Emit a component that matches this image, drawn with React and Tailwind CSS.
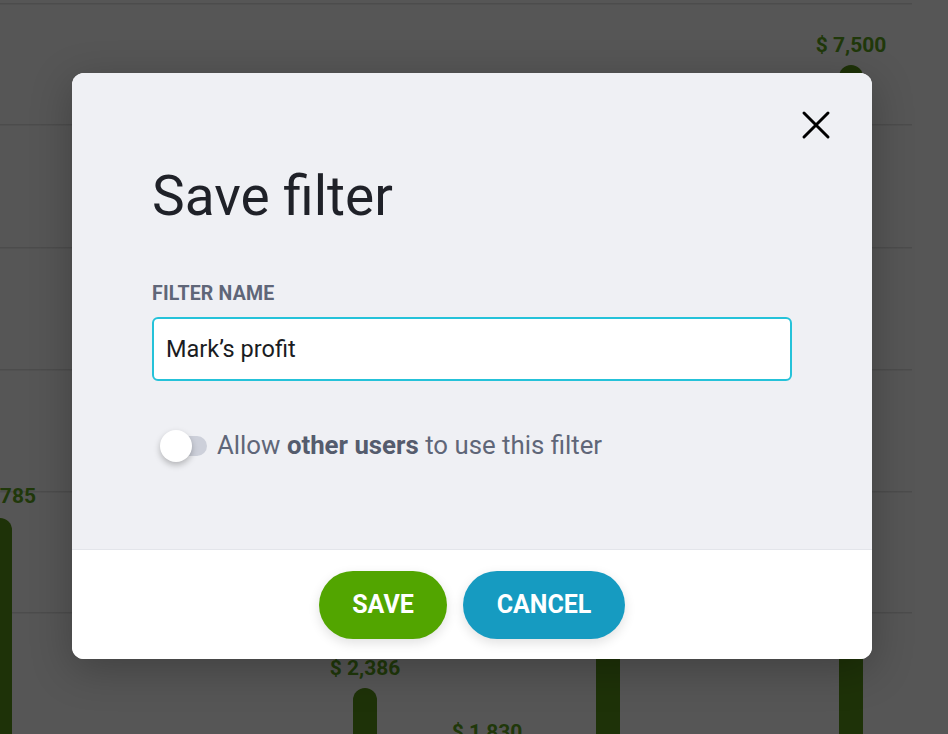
import React, { useState } from 'react';

const GRID_LINES = [3, 124, 247, 369, 491, 612];

const BARS = [
  { x: -12, top: 518, label: '$ 1,785', lx: 36, ly: 503, anchor: 'end' },
  { x: 353, top: 688, label: '$ 2,386', lx: 365, ly: 675, anchor: 'middle' },
  { x: 596, top: 300, label: null },
  { x: 839, top: 65, label: '$ 7,500', lx: 851, ly: 52, anchor: 'middle' },
];

// dimmed chart that sits behind the dialog
const BackdropChart = () => (
  <svg className="absolute inset-0" width="948" height="734" viewBox="0 0 948 734">
    {GRID_LINES.map((y) => (
      <rect key={y} x="0" y={y} width="912" height="1.5" fill="#4c4c4c" />
    ))}
    {BARS.map((b, i) => (
      <g key={i}>
        <rect x={b.x} y={b.top} width="24" height={800 - b.top} rx="12" fill="#1e3208" />
        {b.label && (
          <text
            x={b.lx}
            y={b.ly}
            textAnchor={b.anchor}
            fontFamily="Roboto, sans-serif"
            fontWeight="700"
            fontSize="21"
            fill="#20380a"
          >
            {b.label}
          </text>
        )}
      </g>
    ))}
    <text x="487" y="739" textAnchor="middle" fontFamily="Roboto, sans-serif" fontWeight="700" fontSize="21" fill="#20380a">
      $ 1,830
    </text>
  </svg>
);

const Toggle = ({ on, onChange }) => (
  <button
    type="button"
    onClick={() => onChange(!on)}
    className="relative flex h-8 w-[48px] items-center"
  >
    <span className="ml-[5px] h-[20px] w-[42px] rounded-full bg-[#cdd0da]" />
    <span
      className={`absolute top-0 h-8 w-8 rounded-full bg-white shadow-[0_3px_6px_rgba(0,0,0,0.25)] ${
        on ? 'left-[16px]' : 'left-0'
      }`}
    />
  </button>
);

export default function App() {
  const [name, setName] = useState('Mark’s profit');
  const [shared, setShared] = useState(false);

  return (
    <div
      className="relative h-[734px] w-[948px] overflow-hidden bg-[#565656]"
      style={{ fontFamily: 'Roboto, "Liberation Sans", sans-serif' }}
    >
      <BackdropChart />

      <div className="absolute left-[72px] top-[73px] flex h-[586px] w-[800px] flex-col overflow-hidden rounded-[12px] bg-white shadow-[0_10px_40px_rgba(0,0,0,0.25)]">
        <div className="relative flex-1 border-b border-[#e3e5ea] bg-[#eff0f4] pl-[80px] pr-[80px] pt-[96px]">
          <button type="button" className="absolute right-[40px] top-[36px] flex h-8 w-8 items-center justify-center">
            <svg width="30" height="30" viewBox="0 0 30 30">
              <path d="M3 3 L27 27 M27 3 L3 27" stroke="#000" strokeWidth="3" strokeLinecap="round" />
            </svg>
          </button>

          <h1 className="text-[55px] font-normal leading-none text-[#1f2128]">Save filter</h1>

          <label className="mt-[60px] block text-[19.5px] font-bold leading-none tracking-[0.2px] text-[#5f6678]">
            FILTER NAME
          </label>

          <input
            value={name}
            onChange={(e) => setName(e.target.value)}
            className="mt-[13px] block h-[64px] w-[640px] rounded-[6px] border-2 border-[#25c2d9] bg-white pl-[12px] text-[23.5px] text-[#1a1c22] outline-none"
          />

          <div className="mt-[49px] flex items-center gap-[9px] pl-[8px]">
            <Toggle on={shared} onChange={setShared} />
            <span className="text-[25.8px] leading-none text-[#5f6678]">
              Allow <span className="font-bold text-[#555c6d]">other users</span> to use this filter
            </span>
          </div>
        </div>

        <div className="flex h-[109px] items-center justify-center gap-4 bg-white">
          <button
            type="button"
            className="h-[68px] w-[128px] rounded-full bg-[#52a500] text-[25px] font-bold text-white shadow-[0_4px_12px_rgba(0,0,0,0.12)]"
          >
            SAVE
          </button>
          <button
            type="button"
            className="h-[68px] w-[162px] rounded-full bg-[#169bc1] text-[25px] font-bold text-white shadow-[0_4px_12px_rgba(0,0,0,0.12)]"
          >
            CANCEL
          </button>
        </div>
      </div>
    </div>
  );
}
